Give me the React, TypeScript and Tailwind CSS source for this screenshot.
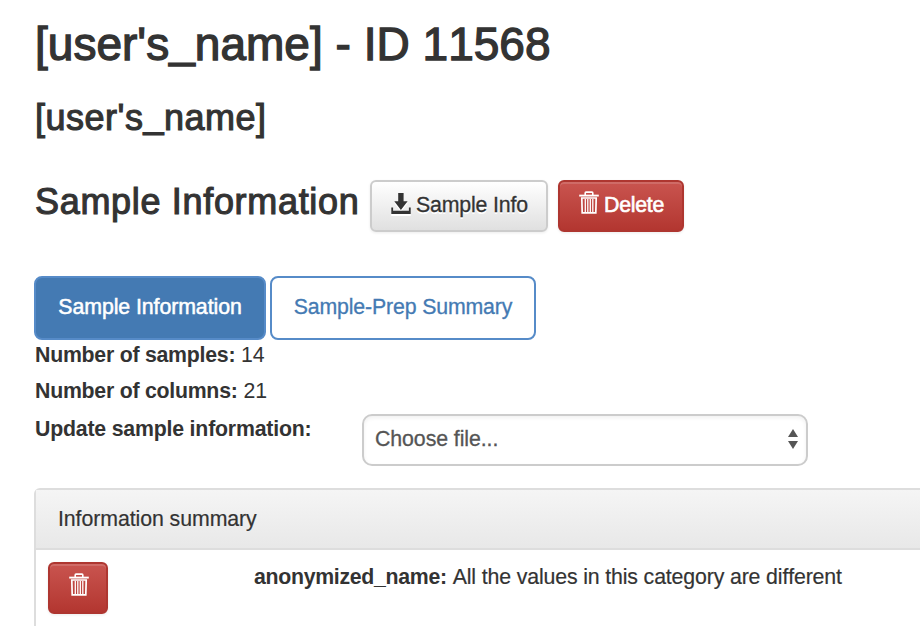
function TrashIcon() {
  return (
    <svg width="20" height="23" viewBox="0 0 20 23" fill="none" stroke="#fff" className="shrink-0">
      <path d="M6.2 4V1.9Q6.2 1.1 7 1.1H13Q13.8 1.1 13.8 1.9V4" strokeWidth="1.6" />
      <path d="M0.2 4.6H19.8" strokeWidth="1.9" />
      <path d="M2.8 7H17.2L16.8 21.8H3.2Z" strokeWidth="1.7" />
      <path d="M6.3 8V21M8.8 8V21M11.3 8V21M13.8 8V21" strokeWidth="1.3" />
    </svg>
  );
}

function DownloadIcon() {
  return (
    <svg width="20" height="21" viewBox="0 0 20 21" fill="#333" className="shrink-0 drop-shadow-[0_2px_0_#fff]">
      <path d="M7.2 0h5.4v8.2h4L9.9 17 3.3 8.2h3.9z" />
      <path d="M0.3 14.5h1.8v3.3h15.8v-3.3h1.8V21H0.3z" />
    </svg>
  );
}

const redButton =
  "flex rounded-[6px] border-2 border-[#ae3630] bg-linear-to-b from-[#c9544f] to-[#b33630] text-white shadow-[inset_0_2px_0_rgba(255,255,255,0.14),0_1px_3px_rgba(0,0,0,0.08)]";

export default function App() {
  return (
    <main className="h-[626px] w-[920px] overflow-hidden bg-white pl-[34px] font-['Liberation_Sans',Arial,sans-serif] text-[21.3px] leading-[30px] tracking-[-0.07px] whitespace-nowrap text-[#333] [font-kerning:none]">
      <h1 className="pt-[19px] pl-[1px] text-[46px] leading-[50px] tracking-[0.02px] [-webkit-text-stroke:1.3px_#333]">
        [user's<span className="align-[3px] leading-0">_</span>name] - ID 11568
      </h1>
      <h2 className="mt-[29px] pl-[1px] text-[36px] leading-[40px] tracking-[0.5px] [-webkit-text-stroke:1.1px_#333]">
        [user's<span className="align-[2px] leading-0">_</span>name]
      </h2>
      <div className="mt-[42px] flex h-[52px]">
        <h2 className="w-[336px] pt-[2px] pl-[1px] text-[36px] leading-[40px] tracking-[0.68px] [-webkit-text-stroke:1.1px_#333]">Sample Information</h2>
        <button className="flex w-[178px] rounded-[6px] border-2 border-[#ccc] bg-linear-to-b from-white to-[#e0e0e0] pt-[11px] pl-[19px] shadow-[0_1px_3px_rgba(0,0,0,0.08)] [text-shadow:0_2px_0_#fff]">
          <DownloadIcon />
          <span className="ml-[5px] leading-[24px] tracking-[-0.15px] [-webkit-text-stroke:0.3px_#333]">Sample Info</span>
        </button>
        <button className={redButton + " ml-[10px] w-[126px] pt-[9px] pl-[19px]"}>
          <TrashIcon />
          <span className="ml-[5px] pt-[2px] leading-[24px] tracking-[-0.25px] [-webkit-text-stroke:0.6px_#fff]">Delete</span>
        </button>
      </div>
      <nav className="mt-[44px] flex h-[64px] gap-1">
        <button className="w-[232px] rounded-[8px] border-2 border-[#568bc8] bg-[#447ab3] pb-[2px] text-white [-webkit-text-stroke:0.5px_#fff]">Sample Information</button>
        <button className="w-[266px] rounded-[8px] border-2 border-[#568bc8] bg-white pb-[2px] tracking-[-0.15px] text-[#447ab3] [-webkit-text-stroke:0.3px_#447ab3]">Sample-Prep Summary</button>
      </nav>
      <p className="h-[36px] pl-[1px]"><b className="tracking-[-0.25px]">Number of samples:</b> 14</p>
      <p className="h-[36px] pl-[1px]"><b className="tracking-[-0.25px]">Number of columns:</b> 21</p>
      <div className="flex h-[54px]">
        <b className="w-[328px] pt-[2px] pl-[1px] tracking-[-0.2px]">Update sample information:</b>
        <div className="mt-[2px] flex h-[52px] w-[446px] items-center justify-between rounded-[10px] border-2 border-[#ccc] pr-[8px] pb-[2px] pl-[11px] text-[#555] shadow-[inset_0_2px_4px_rgba(0,0,0,0.06)]">
          <span className="[-webkit-text-stroke:0.3px_#555]">Choose file...</span>
          <svg width="10" height="20" viewBox="0 0 10 20" fill="#555">
            <path d="M5 0l5 8H0zM0 12h10l-5 8z" />
          </svg>
        </div>
      </div>
      <section className="mt-[22px] h-[160px] w-[900px] rounded-[6px] border-2 border-[#ddd]">
        <header className="h-[60px] border-b-2 border-[#ddd] bg-linear-to-b from-[#f5f5f5] to-[#e8e8e8] pt-[14px] pl-[22px] [-webkit-text-stroke:0.2px_#333]">Information summary</header>
        <div className="flex pt-[12px] pl-[12px]">
          <button className={redButton + " h-[52px] w-[60px] pt-[9px] pl-[19px]"}><TrashIcon /></button>
          <p className="ml-[146px] [-webkit-text-stroke:0.2px_#333]">
            <b className="tracking-[-0.3px] [-webkit-text-stroke:0px]">anonymized_name:</b> <span className="tracking-[-0.14px]">All the values in this category are different</span>
          </p>
        </div>
      </section>
    </main>
  );
}
